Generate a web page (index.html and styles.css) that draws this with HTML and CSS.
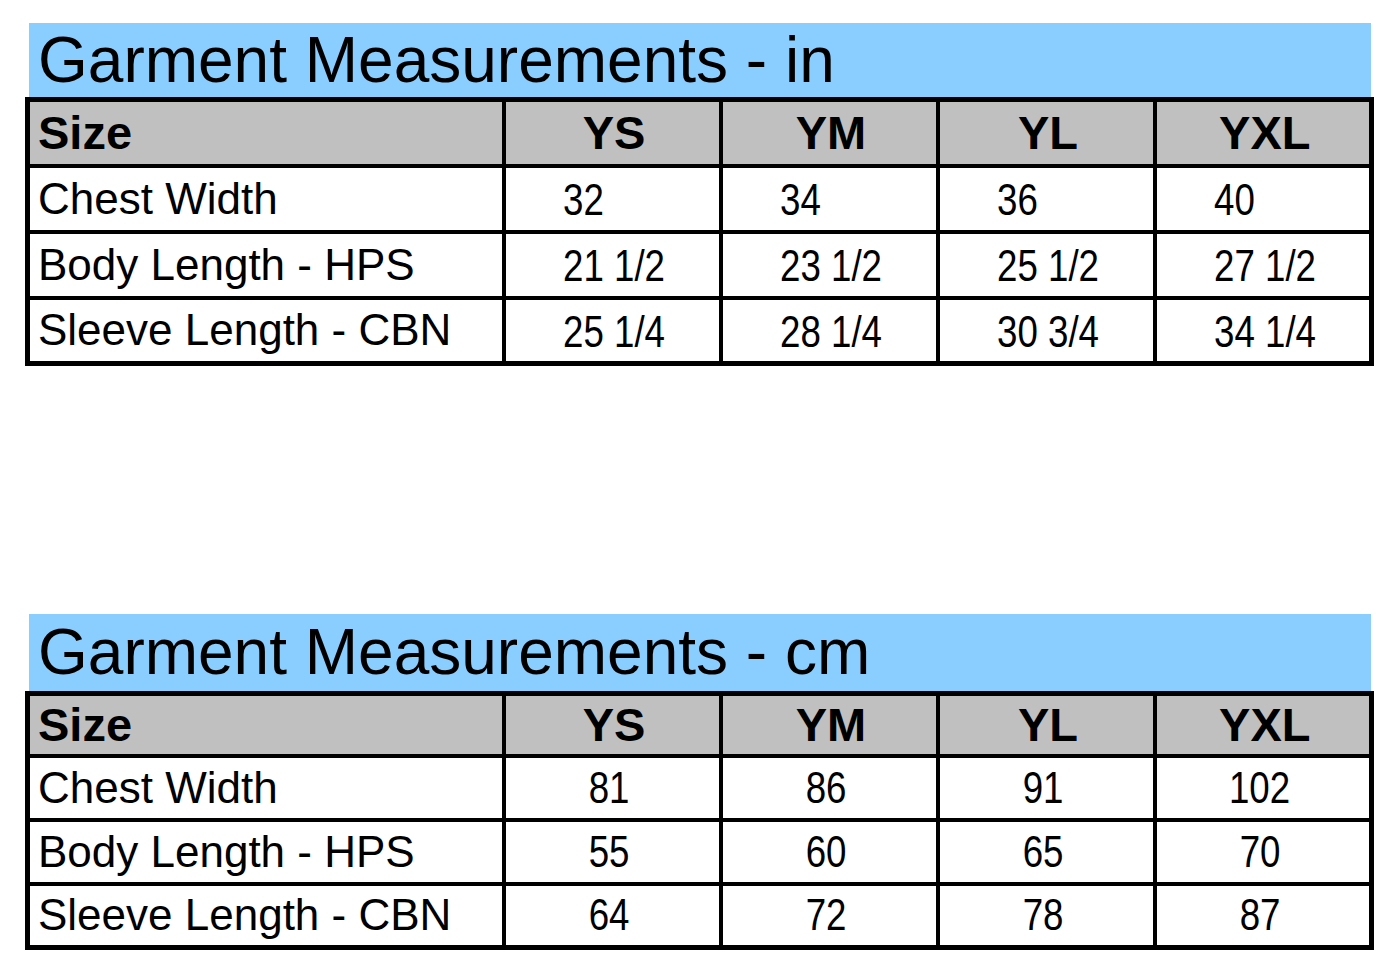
FILE: index.html
```html
<!DOCTYPE html>
<html lang="en">
<head>
<meta charset="utf-8">
<title>Garment Measurements</title>
<link rel="stylesheet" href="styles.css">
</head>
<body>
<div class="page">
  <section class="chart chart-in">
    <h2 class="title">Garment Measurements - in</h2>
    <table class="grid left-values">
      <colgroup><col class="c-label"><col class="c-size"><col class="c-size"><col class="c-size"><col class="c-size"></colgroup>
      <tr class="head"><th class="label">Size</th><th>YS</th><th>YM</th><th>YL</th><th>YXL</th></tr>
      <tr><td class="label">Chest Width</td><td><span class="num">32</span></td><td><span class="num">34</span></td><td><span class="num">36</span></td><td><span class="num">40</span></td></tr>
      <tr><td class="label">Body Length - HPS</td><td><span class="num">21 1/2</span></td><td><span class="num">23 1/2</span></td><td><span class="num">25 1/2</span></td><td><span class="num">27 1/2</span></td></tr>
      <tr><td class="label">Sleeve Length - CBN</td><td><span class="num">25 1/4</span></td><td><span class="num">28 1/4</span></td><td><span class="num">30 3/4</span></td><td><span class="num">34 1/4</span></td></tr>
    </table>
  </section>
  <section class="chart chart-cm">
    <h2 class="title">Garment Measurements - cm</h2>
    <table class="grid center-values">
      <colgroup><col class="c-label"><col class="c-size"><col class="c-size"><col class="c-size"><col class="c-size"></colgroup>
      <tr class="head"><th class="label">Size</th><th>YS</th><th>YM</th><th>YL</th><th>YXL</th></tr>
      <tr><td class="label">Chest Width</td><td><span class="num">81</span></td><td><span class="num">86</span></td><td><span class="num">91</span></td><td><span class="num">102</span></td></tr>
      <tr><td class="label">Body Length - HPS</td><td><span class="num">55</span></td><td><span class="num">60</span></td><td><span class="num">65</span></td><td><span class="num">70</span></td></tr>
      <tr><td class="label">Sleeve Length - CBN</td><td><span class="num">64</span></td><td><span class="num">72</span></td><td><span class="num">78</span></td><td><span class="num">87</span></td></tr>
    </table>
  </section>
</div>
</body>
</html>
```
FILE: styles.css
```css
html, body {
  margin: 0;
  padding: 0;
  background: #ffffff;
}
body {
  font-family: "Liberation Sans", Arial, sans-serif;
  color: #000;
}
.page {
  display: flex;
  flex-direction: column;
  padding-left: 25px;
}
.chart-in {
  margin-top: 23px;
}
.chart-cm {
  margin-top: 248px;
}
.title {
  margin: 0 0 0 4px;
  width: 1342px;
  height: 74px;
  box-sizing: border-box;
  padding-left: 9px;
  background: #8acdff;
  font-weight: normal;
  font-size: 64px;
  line-height: 74px;
  white-space: nowrap;
}
.chart-cm .title {
  height: 77px;
  line-height: 77px;
}
.grid {
  border-collapse: collapse;
  table-layout: fixed;
  width: 1343px;
  border: 5px solid #000;
}
.c-label { width: 476px; }
.c-size { width: 217px; }
.grid th, .grid td {
  border: 4px solid #000;
  padding: 0;
  vertical-align: middle;
  white-space: nowrap;
  overflow: hidden;
}
.grid th {
  background: #c0c0c0;
  font-weight: bold;
  font-size: 47px;
  text-align: center;
  padding-left: 4px;
}
.grid th.label, .grid td.label {
  text-align: left;
  padding-left: 8px;
}
.grid td {
  font-size: 44px;
  background: #fff;
}
.chart-in tr.head { height: 66px; }
.chart-in tr { height: 66px; }
.chart-cm tr.head { height: 62px; }
.chart-cm tr { height: 64px; }
.num {
  display: inline-block;
  font-size: 45px;
  line-height: 1.1;
  transform: scaleX(0.815);
}
.left-values td:not(.label) {
  text-align: left;
  padding-left: 57px;
}
.left-values .num {
  transform-origin: left center;
  padding-top: 3px;
}
.center-values td:not(.label) {
  text-align: center;
  padding-right: 6px;
}
.center-values .num {
  transform-origin: center center;
}
```
